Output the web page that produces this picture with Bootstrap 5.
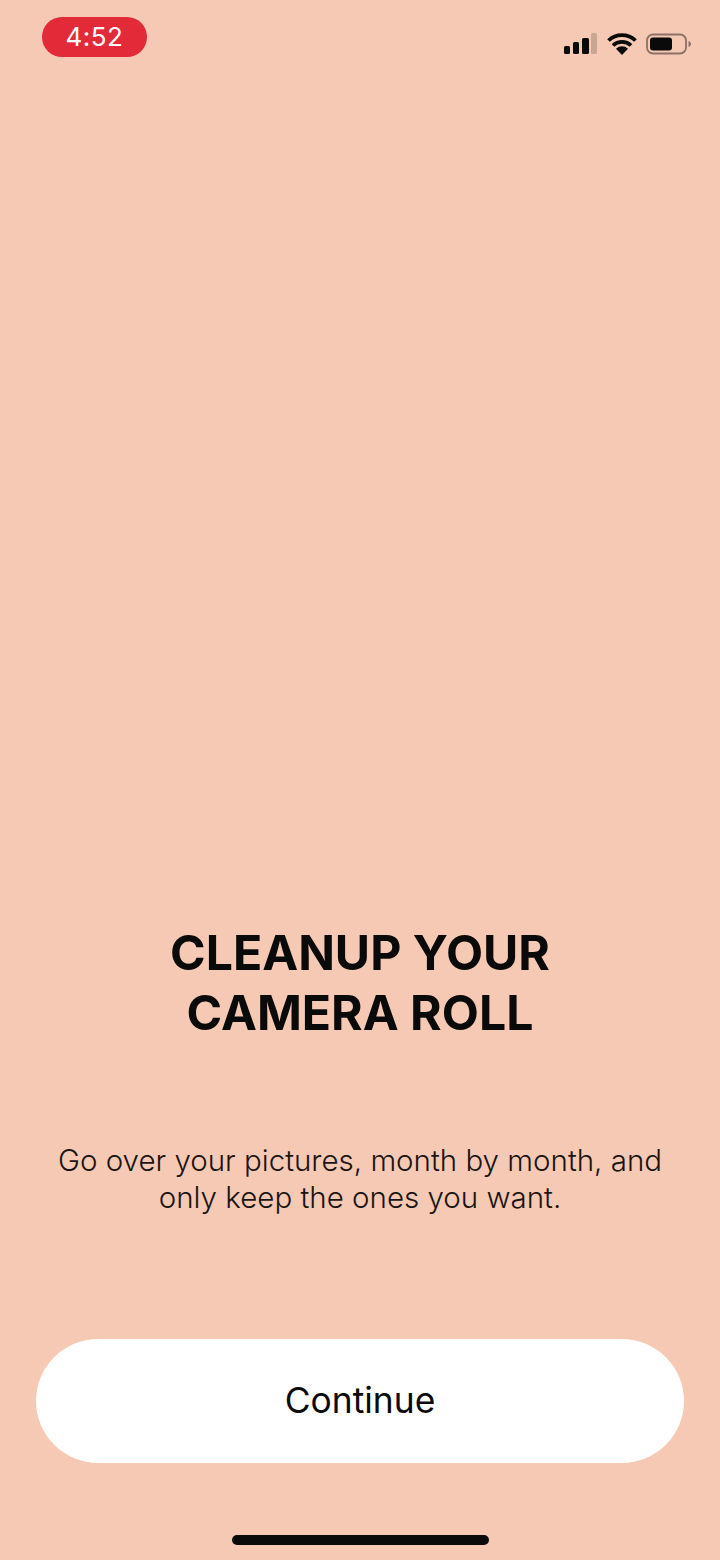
<!DOCTYPE html>
<html lang="en">
<head>
<meta charset="utf-8">
<title>Cleanup</title>
<link href="https://cdn.jsdelivr.net/npm/bootstrap@5.3.0/dist/css/bootstrap.min.css" rel="stylesheet">
<style>
html,body{margin:0;height:1560px;overflow:hidden}
body{background:#f6c9b4;font-family:Inter,"Liberation Sans",sans-serif;color:#0a0a0a}
.screen{height:1560px}
.statusbar{height:92px;padding:17px 28px 0 42px}
.clock{width:105px;height:40px;background:#e32a38;color:#fff;font-size:26px;line-height:40px;border-radius:20px;text-align:center;letter-spacing:.5px}
.sysicons{margin-top:16px;gap:9px}
.sigicon{margin-right:1px}
.spacer{flex:1}
.headline{font-size:48.2px;font-weight:700;line-height:60px;margin:0 0 99px;letter-spacing:0}
.subline{font-size:29.5px;font-weight:300;line-height:37px;margin:0 0 123px;color:#1a1412}
.cta-wrap{padding:0 36px}
.cta{background:#fff;border:0;border-radius:62px;height:124px;width:100%;font-size:35.4px;color:#0a0a0a;font-weight:400}
.homebar{width:257px;height:10px;background:#0a0a0a;border-radius:5px;margin:72px auto 15px}
</style>
</head>
<body>
<div class="screen d-flex flex-column">
  <div class="statusbar d-flex justify-content-between align-items-start">
    <div class="clock">4:52</div>
    <div class="sysicons d-flex align-items-center">
      <svg class="sigicon" width="33" height="22" viewBox="0 0 33 22"><rect x="0" y="13" width="6" height="8" rx="1.5" fill="#0a0a0a"/><rect x="9" y="9" width="6" height="12" rx="1.5" fill="#0a0a0a"/><rect x="18" y="5" width="7" height="16" rx="1.5" fill="#0a0a0a"/><rect x="27" y="0" width="6" height="21" rx="1.5" fill="#c9a594"/></svg>
      <svg width="30" height="22" viewBox="0 0 30 22"><path d="M1.500 7.500a19.500 19.500 0 0 1 27 0M6 12.500a13 13 0 0 1 18 0" fill="none" stroke="#0a0a0a" stroke-width="3.800"/><path d="M15 22l-6-6.200a8.500 8.500 0 0 1 12 0z" fill="#0a0a0a"/></svg>
      <svg width="46" height="22" viewBox="0 0 46 22"><rect x="1" y="1.500" width="39" height="19" rx="6" fill="none" stroke="#8a7266" stroke-width="1.800"/><rect x="4" y="4.500" width="22" height="13" rx="3" fill="#0a0a0a"/><path d="M42.500 8v6c1.500-.5 2.500-1.500 2.500-3s-1-2.500-2.500-3z" fill="#8a7266"/></svg>
    </div>
  </div>
  <div class="spacer"></div>
  <h1 class="headline text-center">CLEANUP YOUR<br>CAMERA ROLL</h1>
  <p class="subline text-center">Go over your pictures, month by month, and<br>only keep the ones you want.</p>
  <div class="cta-wrap"><button type="button" class="btn cta">Continue</button></div>
  <div class="homebar"></div>
</div>
<script src="https://cdn.jsdelivr.net/npm/bootstrap@5.3.0/dist/js/bootstrap.bundle.min.js"></script>
</body>
</html>
